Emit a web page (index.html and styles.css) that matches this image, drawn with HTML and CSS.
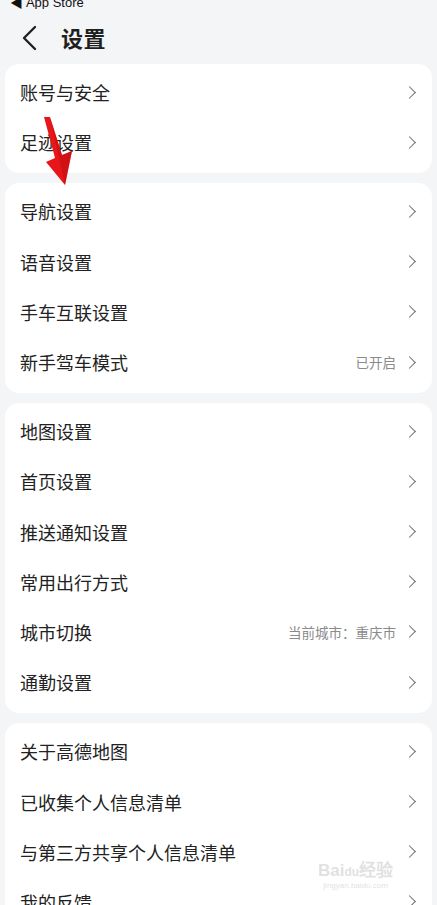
FILE: index.html
```html
<!DOCTYPE html>
<html lang="zh-CN">
<head>
    <meta charset="UTF-8">
    <meta name="viewport" content="width=device-width, initial-scale=1.0">
    <title>设置</title>
    <link rel="stylesheet" href="styles.css">
</head>
<body>
    <div class="statusbar"><span class="back-app">&#9664; App Store</span></div>
    <header class="topbar">
        <svg class="back" width="18" height="26" viewBox="0 0 18 26"><path d="M14 2 L3 13 L14 24" fill="none" stroke="#222" stroke-width="2.4" stroke-linecap="round" stroke-linejoin="round"/></svg>
        <h1>设置</h1>
    </header>

    <main class="groups">
        <section class="card">
            <div class="row"><span class="label">账号与安全</span><span class="arrow"></span></div>
            <div class="row"><span class="label">足迹设置</span><span class="arrow"></span></div>
        </section>
        <section class="card">
            <div class="row"><span class="label">导航设置</span><span class="arrow"></span></div>
            <div class="row"><span class="label">语音设置</span><span class="arrow"></span></div>
            <div class="row"><span class="label">手车互联设置</span><span class="arrow"></span></div>
            <div class="row"><span class="label">新手驾车模式</span><span class="value">已开启</span><span class="arrow"></span></div>
        </section>
        <section class="card">
            <div class="row"><span class="label">地图设置</span><span class="arrow"></span></div>
            <div class="row"><span class="label">首页设置</span><span class="arrow"></span></div>
            <div class="row"><span class="label">推送通知设置</span><span class="arrow"></span></div>
            <div class="row"><span class="label">常用出行方式</span><span class="arrow"></span></div>
            <div class="row"><span class="label">城市切换</span><span class="value">当前城市：重庆市</span><span class="arrow"></span></div>
            <div class="row"><span class="label">通勤设置</span><span class="arrow"></span></div>
        </section>
        <section class="card">
            <div class="row"><span class="label">关于高德地图</span><span class="arrow"></span></div>
            <div class="row"><span class="label">已收集个人信息清单</span><span class="arrow"></span></div>
            <div class="row"><span class="label">与第三方共享个人信息清单</span><span class="arrow"></span></div>
            <div class="row"><span class="label">我的反馈</span><span class="arrow"></span></div>
        </section>
    </main>

    <!-- annotation arrow drawn over the screenshot -->
    <svg class="pointer" width="40" height="80" viewBox="0 0 40 80">
        <path d="M3 2 L9 2 L21 40 L31 36 L24 70 L5 47 L14 43 Z" fill="#e8161b"/>
        <path d="M9 2 L21 40 L31 36 L24 70 Z" fill="#b80d10" opacity="0.5"/>
    </svg>

    <div class="watermark">
        <span class="wm-logo">Bai<b>du</b>经验</span>
        <span class="wm-url">jingyan.baidu.com</span>
    </div>
</body>
</html>
```

FILE: styles.css
```css
body {
    margin: 0;
    background-color: #f4f5f7;
    font-family: "Noto Sans CJK SC", "Noto Sans", sans-serif;
    color: #1f1f1f;
    position: relative;
    height: 905px;
    overflow: hidden;
}
.statusbar {
    height: 9px;
    overflow: hidden;
    position: relative;
}
.back-app {
    position: absolute;
    left: 10px;
    bottom: 0;
    font-family: "Liberation Sans", sans-serif;
    font-size: 13px;
    line-height: 13px;
    color: #111;
}
.topbar {
    display: flex;
    align-items: center;
    height: 55px;
    padding-left: 21px;
}
.back {
    display: block;
    margin-top: 2px;
}
.topbar h1 {
    margin: 0 0 0 22px;
    font-size: 22px;
    font-weight: 700;
    letter-spacing: 0.5px;
}
.groups {
    display: flex;
    flex-direction: column;
    gap: 10px;
    padding: 0 5px;
}
.card {
    background-color: #fff;
    border-radius: 14px;
    padding: 3px 0 6px;
}
.row {
    display: flex;
    align-items: center;
    height: 50.2px;
    padding: 0 18px 0 15px;
}
.label {
    flex: 1;
    font-size: 18px;
    color: #222;
}
.value {
    font-size: 13.5px;
    color: #8a8a8a;
    margin-right: 9px;
}
.arrow {
    width: 8px;
    height: 8px;
    border-top: 1.6px solid #6e6e6e;
    border-right: 1.6px solid #6e6e6e;
    transform: rotate(45deg);
}
.pointer {
    position: absolute;
    left: 41px;
    top: 115px;
}
.watermark {
    position: absolute;
    left: 318px;
    top: 856px;
    display: flex;
    flex-direction: column;
    align-items: center;
    color: rgba(200, 200, 200, 0.55);
    font-family: "Liberation Sans", sans-serif;
}
.wm-logo {
    font-size: 17px;
    font-weight: 700;
}
.wm-logo b {
    font-size: 12px;
}
.wm-url {
    font-size: 8px;
}
```
